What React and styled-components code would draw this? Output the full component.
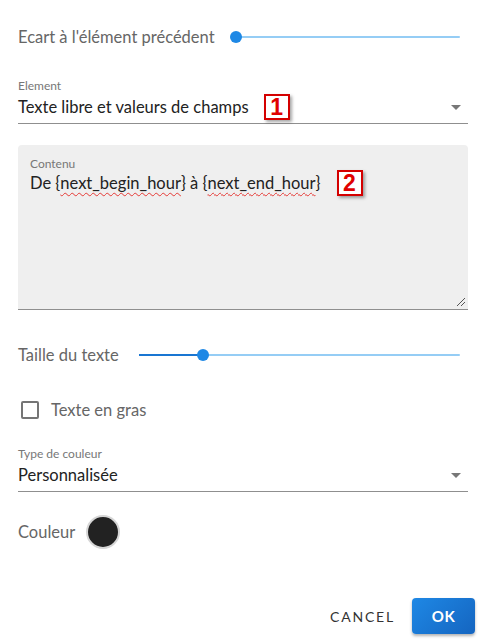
import React from "react";
import styled, { createGlobalStyle } from "styled-components";

const Global = createGlobalStyle`
  html, body { margin: 0; padding: 0; background: #fff; }
  body { font-family: Lato, "Noto Sans", sans-serif; -webkit-font-smoothing: antialiased; }
`;

const Page = styled.div`
  width: 487px;
  height: 641px;
  display: flex;
  flex-direction: column;
  box-sizing: border-box;
`;

const Form = styled.div`
  display: flex;
  flex-direction: column;
  padding: 0 19px 0 18px;
`;

const SliderRow = styled.div`
  display: flex;
  align-items: center;
  height: 24px;
  margin-top: ${(p) => p.$mt}px;
`;

const RowLabel = styled.span`
  font-size: 16.5px;
  color: #666;
  white-space: nowrap;
`;

const Slider = styled.div`
  position: relative;
  flex: 1;
  height: 2px;
  margin-left: ${(p) => p.$ml}px;
  margin-right: 8px;
  background: #95cdf5;
  border-radius: 1px;
`;

const SliderTrack = styled.div`
  position: absolute;
  left: 0;
  top: 0;
  height: 2px;
  background: #1976d2;
`;

const Thumb = styled.div`
  position: absolute;
  top: 1px;
  width: 12px;
  height: 12px;
  margin-left: -6px;
  margin-top: -6px;
  border-radius: 50%;
  background: #1e88e5;
`;

const SelectField = styled.div`
  display: flex;
  flex-direction: column;
  margin-top: ${(p) => p.$mt}px;
  border-bottom: 1px solid #8f8f8f;
  padding-bottom: 4px;
`;

const SmallLabel = styled.span`
  font-size: 12px;
  line-height: 14px;
  color: #777;
`;

const ValueRow = styled.div`
  display: flex;
  align-items: center;
  height: 24px;
  margin-top: ${(p) => p.$mt || 0}px;
  font-size: 16.5px;
  color: #222;
  white-space: pre;
`;

const Caret = styled.span`
  margin-left: auto;
  margin-right: 7px;
  width: 0;
  height: 0;
  border-left: 5px solid transparent;
  border-right: 5px solid transparent;
  border-top: 5px solid #777;
`;

const Badge = styled.span`
  display: inline-flex;
  align-items: center;
  justify-content: center;
  width: 22px;
  height: 22px;
  margin-left: ${(p) => p.$ml}px;
  border: 2px solid #d40000;
  background: #fff;
  color: #e00000;
  font-family: "Liberation Sans", Arial, sans-serif;
  font-weight: bold;
  font-size: 23px;
  line-height: 1;
  box-shadow: 2px 2px 3px rgba(0, 0, 0, 0.35);
`;

const FilledArea = styled.div`
  position: relative;
  margin-top: 21px;
  background: #efefef;
  border-radius: 4px 4px 0 0;
  border-bottom: 1px solid #8f8f8f;
  padding: 12px 12px 0 12px;
  display: flex;
  flex-direction: column;
  height: 152px;
`;

const Squiggle = styled.span`
  text-decoration: underline wavy #e53935;
  text-decoration-thickness: 1px;
  text-underline-offset: 3px;
`;

const ResizeHandle = styled.svg`
  position: absolute;
  right: 2px;
  bottom: 2px;
`;

const CheckRow = styled.label`
  display: flex;
  align-items: center;
  height: 24px;
  margin-top: 31px;
  padding-left: 3px;
`;

const Box = styled.span`
  width: 14px;
  height: 14px;
  border: 2px solid #757575;
  border-radius: 2px;
  margin-right: 12px;
`;

const ColorRow = styled.div`
  display: flex;
  align-items: center;
  margin-top: 23px;
  height: 34px;
`;

const Swatch = styled.span`
  width: 30px;
  height: 30px;
  margin-left: 11px;
  border-radius: 50%;
  background: #222;
  border: 2px solid #d6d6d6;
`;

const Footer = styled.div`
  display: flex;
  justify-content: flex-end;
  align-items: center;
  gap: 9px;
  padding-right: 12px;
  margin-top: 49px;
`;

const TextButton = styled.button`
  border: none;
  background: transparent;
  font-family: inherit;
  font-size: 14px;
  letter-spacing: 1.8px;
  color: #333;
  padding: 6px 8px;
  cursor: pointer;
`;

const PrimaryButton = styled.button`
  width: 63px;
  height: 36px;
  border: none;
  border-radius: 4px;
  background: linear-gradient(135deg, #1e88e5, #1565c0);
  color: #fff;
  font-family: inherit;
  font-weight: 700;
  font-size: 15px;
  letter-spacing: 0.5px;
  box-shadow: 0 2px 3px rgba(0, 0, 0, 0.3);
  cursor: pointer;
`;

export default function App() {
  return (
    <Page>
      <Global />
      <Form>
        <SliderRow $mt={25}>
          <RowLabel>Ecart à l'élément précédent</RowLabel>
          <Slider $ml={21}>
            <SliderTrack style={{ width: "0%" }} />
            <Thumb style={{ left: "0%" }} />
          </Slider>
        </SliderRow>

        <SelectField $mt={30}>
          <SmallLabel>Element</SmallLabel>
          <ValueRow $mt={2}>
            Texte libre et valeurs de champs
            <Badge $ml={15}>1</Badge>
            <Caret />
          </ValueRow>
        </SelectField>

        <FilledArea>
          <SmallLabel>Contenu</SmallLabel>
          <ValueRow>
            {"De {"}
            <Squiggle>next_begin_hour</Squiggle>
            {"} à {"}
            <Squiggle>next_end_hour</Squiggle>
            {"}"}
            <Badge $ml={16}>2</Badge>
          </ValueRow>
          <ResizeHandle width="10" height="10" viewBox="0 0 10 10">
            <line x1="1" y1="9" x2="9" y2="1" stroke="#555" strokeWidth="1" />
            <line x1="5" y1="9" x2="9" y2="5" stroke="#555" strokeWidth="1" />
          </ResizeHandle>
        </FilledArea>

        <SliderRow $mt={33}>
          <RowLabel>Taille du texte</RowLabel>
          <Slider $ml={20}>
            <SliderTrack style={{ width: "20%" }} />
            <Thumb style={{ left: "20%" }} />
          </Slider>
        </SliderRow>

        <CheckRow>
          <Box />
          <RowLabel>Texte en gras</RowLabel>
        </CheckRow>

        <SelectField $mt={25}>
          <SmallLabel>Type de couleur</SmallLabel>
          <ValueRow $mt={2}>
            Personnalisée
            <Caret />
          </ValueRow>
        </SelectField>

        <ColorRow>
          <RowLabel>Couleur</RowLabel>
          <Swatch />
        </ColorRow>
      </Form>
      <Footer>
        <TextButton>CANCEL</TextButton>
        <PrimaryButton>OK</PrimaryButton>
      </Footer>
    </Page>
  );
}
